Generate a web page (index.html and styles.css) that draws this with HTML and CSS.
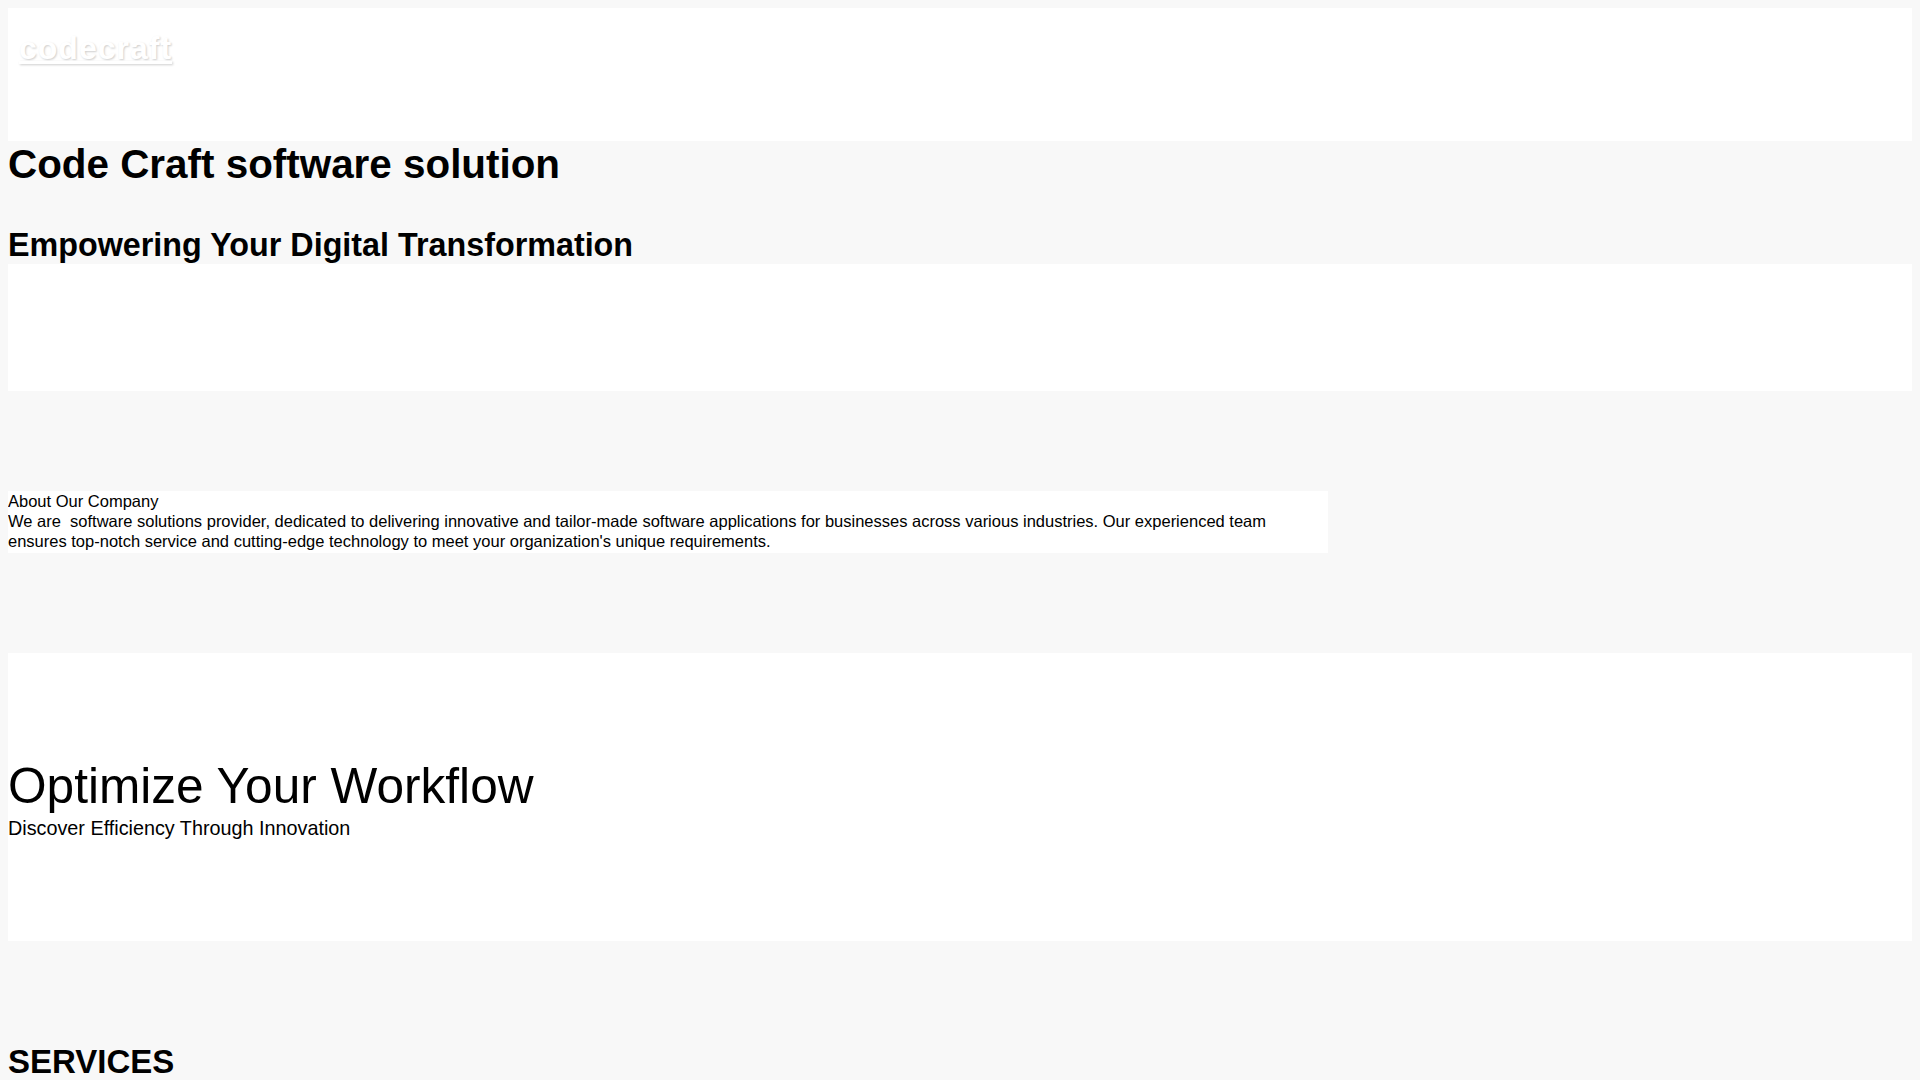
FILE: index.html
```html
<!DOCTYPE html>
<html lang="en">
<head>
    <meta charset="UTF-8">
    <meta name="viewport" content="width=device-width, initial-scale=1.0">
    <title>codecraft</title>
    <link rel="stylesheet" href="styles.css">
</head>
<body>

    <div class="header">
        <a href="#" class="logo">codecraft</a>
    </div>

    <div class="hero">
        <h1>Code Craft software solution</h1>
        <h2>Empowering Your Digital Transformation</h2>
    </div>

    <div class="banner"></div>

    <div class="about">
        <div class="about-title">About Our Company</div>
        <p>We are&nbsp; software solutions provider, dedicated to delivering innovative and tailor-made software applications for businesses across various industries. Our experienced team ensures top-notch service and cutting-edge technology to meet your organization's unique requirements.</p>
    </div>

    <div class="workflow">
        <div class="workflow-title">Optimize Your Workflow</div>
        <div class="workflow-sub">Discover Efficiency Through Innovation</div>
    </div>

    <div class="services">
        <h3 class="services-title">SERVICES</h3>
        <ul class="service-list">
            <li class="service-item">
                <h4>Custom Software Development</h4>
                <p>Tailor-made applications designed around your business processes and goals.</p>
            </li>
            <li class="service-item">
                <h4>Web Application Development</h4>
                <p>Fast, secure and scalable web platforms built with modern technologies.</p>
            </li>
            <li class="service-item">
                <h4>Mobile App Development</h4>
                <p>Native and cross-platform apps that keep your customers connected.</p>
            </li>
            <li class="service-item">
                <h4>Cloud Solutions</h4>
                <p>Migration, hosting and management of your systems in the cloud.</p>
            </li>
            <li class="service-item">
                <h4>IT Consulting</h4>
                <p>Expert advice to plan and guide your digital transformation.</p>
            </li>
            <li class="service-item">
                <h4>Support &amp; Maintenance</h4>
                <p>Ongoing care to keep your software running smoothly.</p>
            </li>
        </ul>
    </div>

    <div class="contact">
        <h3 class="contact-title">CONTACT US</h3>
        <p>Get in touch with our team to discuss your next project.</p>
        <form class="contact-form" action="#" method="POST">
            <input type="text" placeholder="Name">
            <input type="email" placeholder="Email">
            <textarea rows="8" placeholder="Message"></textarea>
            <button type="submit">Send</button>
        </form>
    </div>

    <div class="footer">
        <p>&copy; 2024 Code Craft software solution. All rights reserved.</p>
    </div>

</body>
</html>
```

FILE: styles.css
```css
body {
    font-family: "Liberation Sans", Arial, sans-serif;
    background-color: #f8f8f8;
    color: #000;
    margin: 8px;
}

.header {
    background-color: #fff;
    padding: 22px 0 74px 11px;
}

.logo {
    font-size: 32px;
    font-weight: bold;
    letter-spacing: 1px;
    color: #fff;
    text-shadow: 1px 1px 2px #cfcfcf;
}

.hero h1 {
    font-size: 40.4px;
    margin: 0 0 39px;
}

.hero h2 {
    font-size: 32.3px;
    margin: 0;
}

.banner {
    background-color: #fff;
    height: 127px;
}

.about {
    background-color: #fff;
    width: 1320px;
    margin-top: 100px;
    padding-bottom: 2px;
    font-size: 16.5px;
    line-height: 20px;
}

.about p {
    margin: 0;
}

.workflow {
    background-color: #fff;
    padding: 104px 0 101px;
    margin-top: 100px;
}

.workflow-title {
    font-size: 49.6px;
}

.workflow-sub {
    font-size: 19.8px;
    margin-top: 2px;
}

.services {
    padding-top: 102px;
}

.services-title, .contact-title {
    font-size: 33px;
    margin: 0 0 30px;
}

.service-list {
    list-style-type: none;
    padding: 0;
    margin: 0;
}

.service-item {
    background-color: #fff;
    padding: 45px 20px;
    margin-bottom: 20px;
}

.service-item h4 {
    font-size: 24px;
    margin: 0 0 10px;
}

.service-item p {
    margin: 0;
    font-size: 16px;
}

.contact {
    margin-top: 100px;
}

.contact p {
    margin: 0 0 40px;
}

.contact-form {
    display: flex;
    flex-direction: column;
    gap: 10px;
    width: 600px;
}

.contact-form input, .contact-form textarea {
    padding: 8px 10px;
    border: 1px solid #ccc;
    font-size: 16px;
    font-family: inherit;
}

.contact-form button {
    align-self: flex-start;
    padding: 8px 15px;
    border: 1px solid #ccc;
    background-color: #fff;
    font-size: 16px;
    cursor: pointer;
}

.footer {
    background-color: #fff;
    margin-top: 100px;
    padding: 50px 0;
    text-align: center;
}

.footer p {
    margin: 0;
}
```
